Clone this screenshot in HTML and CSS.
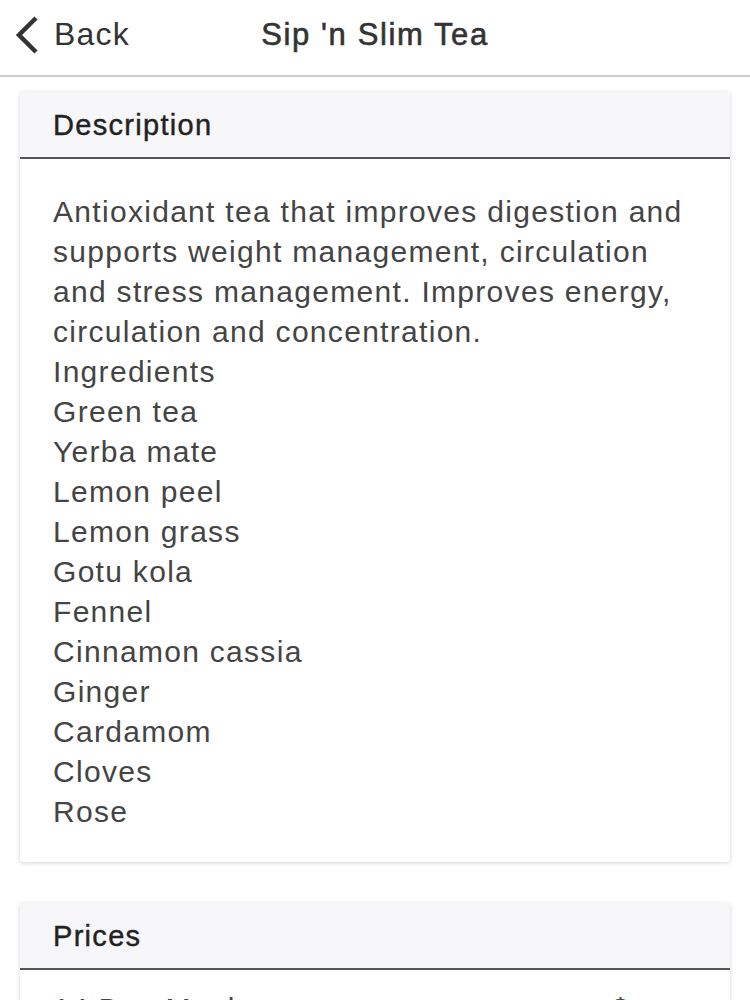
FILE: index.html
```html
<!DOCTYPE html>
<html>
<head>
<meta charset="utf-8">
<link rel="stylesheet" href="styles.css">
</head>
<body>
<header class="navbar">
  <a class="back">
    <svg class="chev" width="26" height="40" viewBox="0 0 26 40"><path d="M22 3 L5 20 L22 37" fill="none" stroke="#333" stroke-width="4.5"/></svg>
    <span>Back</span>
  </a>
  <h1 class="title">Sip 'n Slim Tea</h1>
</header>
<main class="content">
  <section class="card">
    <div class="card-head">Description</div>
    <div class="card-body">
      <p>Antioxidant tea that improves digestion and supports weight management, circulation and stress management. Improves energy, circulation and concentration.</p>
      <p>Ingredients</p>
      <p>Green tea</p>
      <p>Yerba mate</p>
      <p>Lemon peel</p>
      <p>Lemon grass</p>
      <p>Gotu kola</p>
      <p>Fennel</p>
      <p>Cinnamon cassia</p>
      <p>Ginger</p>
      <p>Cardamom</p>
      <p>Cloves</p>
      <p>Rose</p>
    </div>
  </section>
  <section class="card">
    <div class="card-head">Prices</div>
    <div class="card-body row">
      <span>14 Day Meal</span>
      <span>$</span>
    </div>
  </section>
</main>
</body>
</html>
```
FILE: styles.css
```css
* { box-sizing: border-box; }
html, body { margin: 0; padding: 0; background: #fff; }
body { font-family: "Liberation Sans", Arial, sans-serif; color: #333; width: 750px; overflow: hidden; }
.navbar {
  height: 77px;
  border-bottom: 2px solid #cfcfcf;
  display: flex;
  align-items: center;
  position: relative;
  padding-bottom: 6px;
}
.back {
  display: flex;
  align-items: center;
  gap: 14px;
  padding-left: 14px;
  font-size: 32px;
  letter-spacing: 1.2px;
  color: #333;
}
.chev { display: block; }
.title {
  position: absolute;
  left: 0; right: 0;
  top: 0;
  height: 69px;
  display: flex; align-items: center; justify-content: center;
  margin: 0;
  font-size: 31px;
  font-weight: normal;
  letter-spacing: 1.6px;
  color: #333;
  -webkit-text-stroke: 0.6px #333;
  pointer-events: none;
}
.content { padding: 15px 20px 0; display: flex; flex-direction: column; gap: 41px; }
.card {
  background: #fff;
  box-shadow: 0 1px 4px rgba(0,0,0,0.18);
  border-radius: 3px;
  overflow: hidden;
}
.card-head {
  background: #f7f6f8;
  height: 67px;
  border-bottom: 2px solid #555;
  display: flex; align-items: center;
  padding-left: 33px;
  padding-top: 2px;
  font-size: 29px;
  letter-spacing: 1.3px;
  color: #222;
  -webkit-text-stroke: 0.4px #222;
}
.card-body {
  padding: 33px 33px 30px;
  font-size: 30px;
  line-height: 40px;
  letter-spacing: 1.3px;
  color: #444;
}
.card-body p { margin: 0; }
.row { display: flex; justify-content: space-between; padding-top: 19px; padding-right: 100px; }
```
